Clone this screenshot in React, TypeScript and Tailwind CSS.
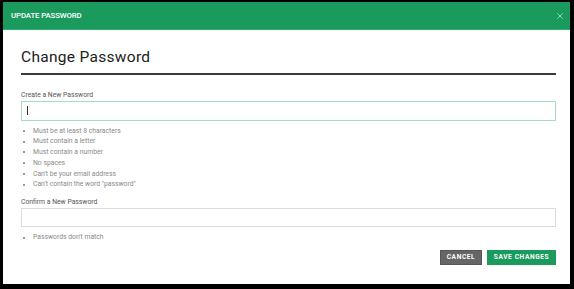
import React from "react";

const rules = [
  "Must be at least 8 characters",
  "Must contain a letter",
  "Must contain a number",
  "No spaces",
  "Can't be your email address",
  "Can't contain the word \"password\"",
];

const Bullets = ({ items }: { items: string[] }) => (
  <ul className="flex flex-col">
    {items.map((item) => (
      <li
        key={item}
        className="flex items-center h-[10.8px] text-[6.8px] text-[#8a8a8a] leading-none"
      >
        <span className="w-[2px] h-[2px] rounded-full bg-[#777] ml-[2px] mr-[8px]" />
        {item}
      </li>
    ))}
  </ul>
);

const App = () => {
  return (
    <div
      className="w-[574px] h-[289px] bg-black pt-[2px] pl-[3px] pr-[4px] pb-[5px]"
      style={{ fontFamily: "Roboto, 'Liberation Sans', sans-serif" }}
    >
      <div className="w-full h-full bg-white flex flex-col">
        {/* Header */}
        <div className="flex items-center justify-between h-[28px] bg-[#1a9a5c] border-b border-[#34b072] pl-[8px] pr-[6px]">
          <span className="text-white text-[7.8px] font-medium tracking-[-0.1px]">
            UPDATE PASSWORD
          </span>
          <svg width="8" height="8" viewBox="0 0 8 8">
            <path
              d="M1.5 1.5L6.5 6.5M6.5 1.5L1.5 6.5"
              stroke="#8fd3ae"
              strokeWidth="1"
              strokeLinecap="round"
            />
          </svg>
        </div>

        <div className="flex flex-col pl-[18px] pr-[14px]">
          <h1 className="mt-[18px] text-[15.5px] leading-[18px] text-[#222] tracking-[0.3px]">
            Change Password
          </h1>
          <div className="mt-[7px] h-[1.5px] bg-[#3a3a3a]" />

          <label className="mt-[16px] text-[6.8px] leading-[8px] text-[#555]">
            Create a New Password
          </label>
          <div className="mt-[2px] h-[20px] border border-[#a4dcbe] flex items-center pl-[5px]">
            <span className="w-[1px] h-[9px] bg-[#333]" />
          </div>
          <div className="mt-[5px]">
            <Bullets items={rules} />
          </div>

          <label className="mt-[8px] text-[6.8px] leading-[8px] text-[#555]">
            Confirm a New Password
          </label>
          <div className="mt-[2px] h-[19px] border border-[#dcdcdc]" />
          <div className="mt-[5px]">
            <Bullets items={["Passwords don't match"]} />
          </div>

          <div className="mt-[7px] flex justify-end gap-[5px]">
            <button className="h-[15px] w-[42px] bg-[#666] border border-[#555] text-white text-[6.6px] font-bold tracking-[0.6px]">
              CANCEL
            </button>
            <button className="h-[15px] w-[69px] bg-[#1a9a5c] text-white text-[6.6px] font-bold tracking-[0.6px]">
              SAVE CHANGES
            </button>
          </div>
        </div>
      </div>
    </div>
  );
};

export default App;
